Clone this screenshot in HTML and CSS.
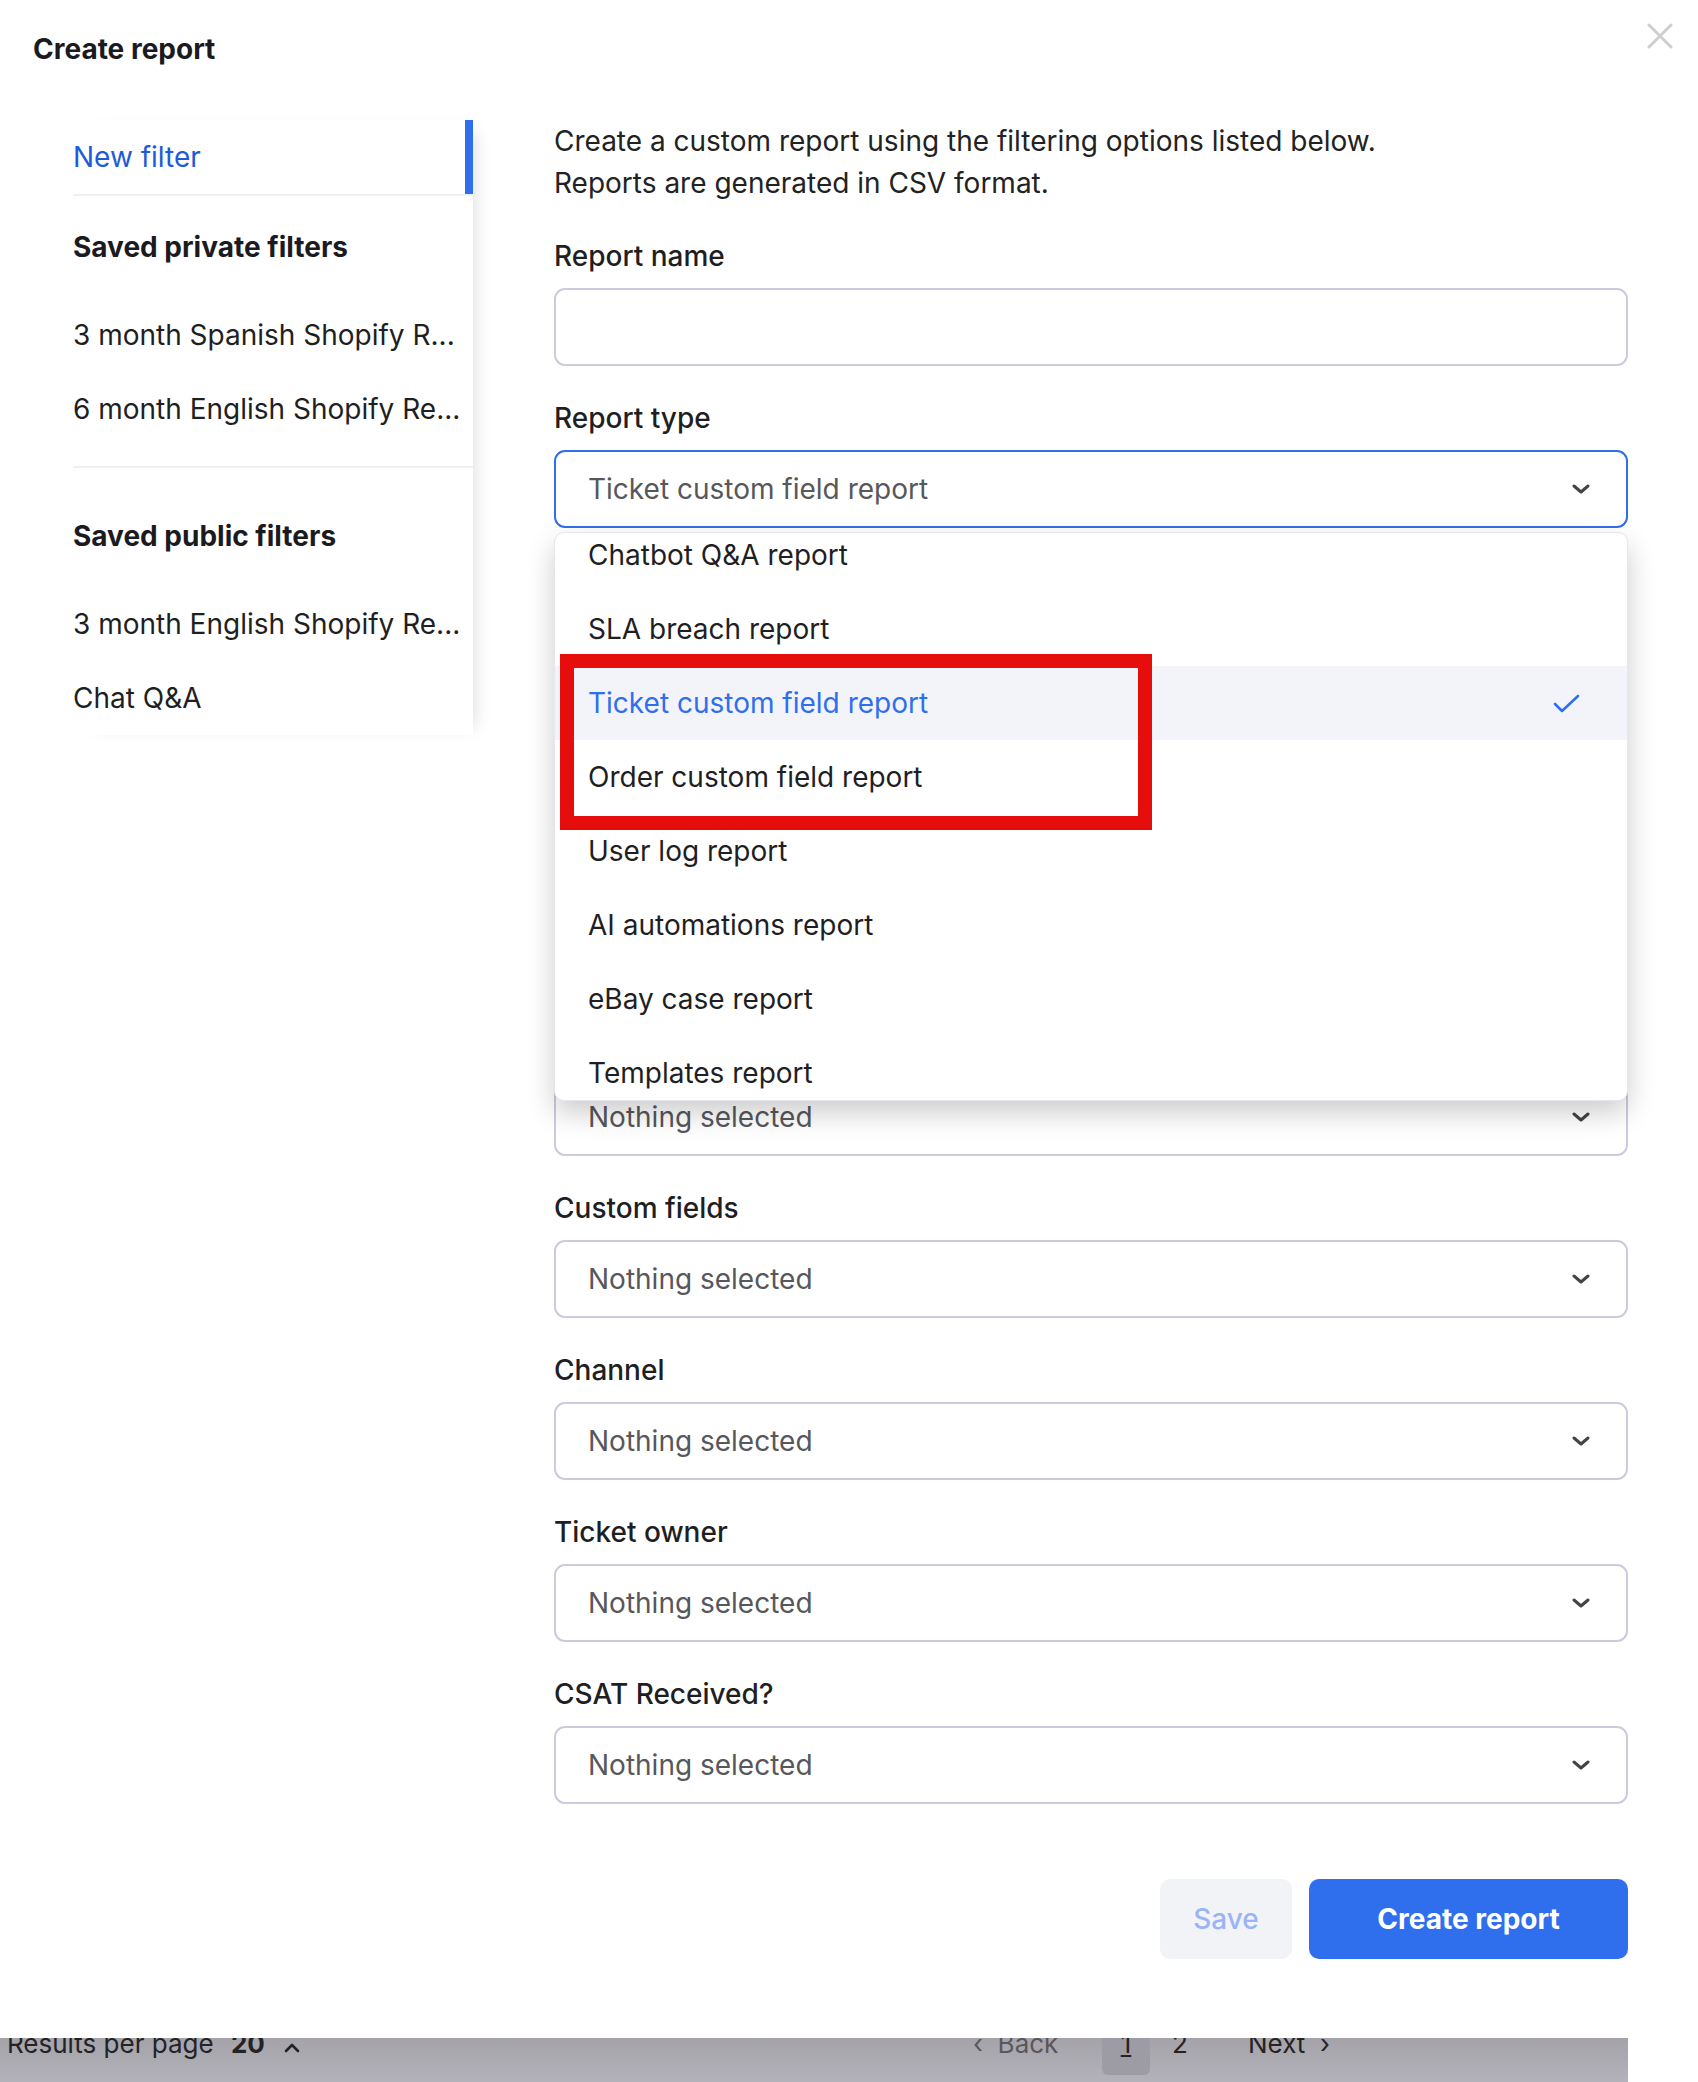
FILE: index.html
```html
<!DOCTYPE html>
<html lang="en">
<head>
    <meta charset="UTF-8">
    <meta name="viewport" content="width=device-width, initial-scale=1.0">
    <title>Create report</title>
    <link rel="stylesheet" href="styles.css">
</head>
<body>
    <div class="modal">
        <div class="modal-header">
            <h1>Create report</h1>
            <button class="close" type="button" aria-label="Close">
                <svg width="26" height="26" viewBox="0 0 26 26"><path d="M2 2 L24 24 M24 2 L2 24" stroke="#cfcfd1" stroke-width="3" stroke-linecap="round"/></svg>
            </button>
        </div>

        <div class="modal-body">
            <aside class="filters">
                <div class="filter-item active">New filter</div>
                <div class="divider"></div>
                <h3>Saved private filters</h3>
                <div class="filter-item">3 month Spanish Shopify R...</div>
                <div class="filter-item">6 month English Shopify Re...</div>
                <div class="divider gap"></div>
                <h3 class="public">Saved public filters</h3>
                <div class="filter-item">3 month English Shopify Re...</div>
                <div class="filter-item">Chat Q&amp;A</div>
            </aside>

            <form class="report-form">
                <p class="intro">Create a custom report using the filtering options listed below.<br>Reports are generated in CSV format.</p>

                <div class="field">
                    <label for="reportname">Report name</label>
                    <input type="text" id="reportname" class="input">
                </div>

                <div class="field">
                    <label>Report type</label>
                    <div class="select-wrap">
                        <div class="select open">
                            <span>Ticket custom field report</span>
                            <svg class="chevron" width="18" height="10" viewBox="0 0 18 10"><path d="M2 2 L9 8 L16 2" fill="none" stroke="#444" stroke-width="3" stroke-linecap="round" stroke-linejoin="round"/></svg>
                        </div>
                        <div class="dropdown">
                            <ul class="options">
                                <li>Chatbot Q&amp;A report</li>
                                <li>SLA breach report</li>
                                <li class="selected">Ticket custom field report
                                    <svg width="27" height="19" viewBox="0 0 27 19"><path d="M2 10 L9 17 L25 2" fill="none" stroke="#2f6fed" stroke-width="2.6" stroke-linecap="round" stroke-linejoin="round"/></svg>
                                </li>
                                <li>Order custom field report</li>
                                <li>User log report</li>
                                <li>AI automations report</li>
                                <li>eBay case report</li>
                                <li>Templates report</li>
                            </ul>
                            <div class="annotation"></div>
                        </div>
                    </div>
                </div>

                <!-- fields hidden behind the open dropdown -->
                <div class="covered">
                    <div class="field hidden">
                        <label>Date range</label>
                        <div class="select"><span>Last 30 days</span></div>
                    </div>
                    <div class="field hidden">
                        <label>Language</label>
                        <div class="select"><span>Nothing selected</span></div>
                    </div>
                    <div class="field hidden">
                        <label>Brand</label>
                        <div class="select"><span>Nothing selected</span></div>
                    </div>
                    <div class="field">
                        <label class="hidden">Tags</label>
                        <div class="select">
                            <span>Nothing selected</span>
                            <svg class="chevron" width="18" height="10" viewBox="0 0 18 10"><path d="M2 2 L9 8 L16 2" fill="none" stroke="#444" stroke-width="3" stroke-linecap="round" stroke-linejoin="round"/></svg>
                        </div>
                    </div>
                </div>

                <div class="field">
                    <label>Custom fields</label>
                    <div class="select">
                        <span>Nothing selected</span>
                        <svg class="chevron" width="18" height="10" viewBox="0 0 18 10"><path d="M2 2 L9 8 L16 2" fill="none" stroke="#444" stroke-width="3" stroke-linecap="round" stroke-linejoin="round"/></svg>
                    </div>
                </div>

                <div class="field">
                    <label>Channel</label>
                    <div class="select">
                        <span>Nothing selected</span>
                        <svg class="chevron" width="18" height="10" viewBox="0 0 18 10"><path d="M2 2 L9 8 L16 2" fill="none" stroke="#444" stroke-width="3" stroke-linecap="round" stroke-linejoin="round"/></svg>
                    </div>
                </div>

                <div class="field">
                    <label>Ticket owner</label>
                    <div class="select">
                        <span>Nothing selected</span>
                        <svg class="chevron" width="18" height="10" viewBox="0 0 18 10"><path d="M2 2 L9 8 L16 2" fill="none" stroke="#444" stroke-width="3" stroke-linecap="round" stroke-linejoin="round"/></svg>
                    </div>
                </div>

                <div class="field">
                    <label>CSAT Received?</label>
                    <div class="select">
                        <span>Nothing selected</span>
                        <svg class="chevron" width="18" height="10" viewBox="0 0 18 10"><path d="M2 2 L9 8 L16 2" fill="none" stroke="#444" stroke-width="3" stroke-linecap="round" stroke-linejoin="round"/></svg>
                    </div>
                </div>

                <div class="actions">
                    <button type="button" class="btn save">Save</button>
                    <button type="button" class="btn primary">Create report</button>
                </div>
            </form>
        </div>
    </div>

    <div class="page-peek">
        <div class="peek-row">
            <div class="per-page">Results per page <b>20</b>
                <svg width="16" height="10" viewBox="0 0 16 10"><path d="M2 8 L8 2 L14 8" fill="none" stroke="#222" stroke-width="2.6" stroke-linecap="round" stroke-linejoin="round"/></svg>
            </div>
            <div class="pager">
                <span class="back">‹ &nbsp;Back</span>
                <span class="page current">1</span>
                <span class="page">2</span>
                <span class="next">Next &nbsp;›</span>
            </div>
        </div>
    </div>
</body>
</html>
```

FILE: styles.css
```css
body{
    margin: 0;
    font-family: Inter, "Noto Sans", sans-serif;
    color: #1f1f23;
    background: white;
}
.modal{
    height: 2038px;
    background: white;
    box-sizing: border-box;
}
.modal-header{
    display: flex;
    justify-content: space-between;
    align-items: flex-start;
    padding: 23px 25px 0 33px;
}
h1{
    margin: 0;
    font-size: 28px;
    line-height: 52px;
    font-weight: 700;
    color: #1b1b1f;
}
.close{
    border: none;
    background: none;
    padding: 0;
    width: 26px;
    height: 26px;
    cursor: pointer;
}
.modal-body{
    display: grid;
    grid-template-columns: 400px 1074px;
    column-gap: 81px;
    padding-left: 73px;
    margin-top: 45px;
}

/* left column */
.filters{
    align-self: start;
    font-size: 28px;
    box-shadow: 12px 2px 16px -10px rgba(0,0,0,0.13);
}
.filter-item{
    line-height: 74px;
    white-space: nowrap;
    color: #1f1f23;
}
.filter-item.active{
    color: #1d5bd8;
    border-right: 8px solid #2f6fed;
}
.divider{
    height: 2px;
    background: #eef0f5;
}
.divider.gap{
    margin-top: 20px;
}
.filters h3{
    margin: 30px 0;
    font-size: 28px;
    line-height: 42px;
    font-weight: 700;
    color: #1b1b1f;
}
.filters h3.public{
    margin-top: 47px;
}

/* right column */
.report-form{
    display: flex;
    flex-direction: column;
    gap: 31px;
    font-size: 28px;
}
.intro{
    margin: 0;
    line-height: 42px;
    color: #222;
}
.field label{
    display: block;
    line-height: 42px;
    margin-bottom: 11px;
    font-weight: 500;
    color: #1f1f23;
}
.hidden{
    visibility: hidden;
}
.input, .select{
    width: 100%;
    height: 78px;
    box-sizing: border-box;
    border: 2px solid #caccdd;
    border-radius: 11px;
    background: white;
    font-family: inherit;
    font-size: 28px;
}
.select{
    display: flex;
    align-items: center;
    justify-content: space-between;
    padding: 0 36px 0 32px;
    color: #57575c;
}
.select.open{
    border-color: #2f6fed;
}
.select-wrap{
    position: relative;
}
.dropdown{
    position: absolute;
    top: calc(100% + 4px);
    left: 0;
    right: 0;
    height: 569px;
    overflow: hidden;
    background: white;
    border: 1px solid #e4e6f0;
    border-radius: 10px;
    box-shadow: 0 12px 28px rgba(0,0,0,0.2);
    z-index: 10;
    box-sizing: border-box;
}
.options{
    list-style: none;
    margin: -15px 0 0;
    padding: 0;
}
.options li{
    height: 74px;
    display: flex;
    align-items: center;
    justify-content: space-between;
    padding: 0 47px 0 33px;
    color: #1f1f23;
}
.options li.selected{
    background: #f3f4f9;
    color: #2f6fed;
}
.annotation{
    position: absolute;
    left: 5px;
    top: 121px;
    width: 592px;
    height: 176px;
    box-sizing: border-box;
    border: 14px solid #e60d0d;
}
.covered{
    display: flex;
    flex-direction: column;
    gap: 24px;
    margin-top: 1px;
}
.actions{
    display: flex;
    justify-content: flex-end;
    gap: 17px;
    margin-top: 44px;
}
.btn{
    height: 80px;
    border: none;
    border-radius: 10px;
    font-family: inherit;
    font-size: 28px;
    cursor: pointer;
}
.btn.save{
    width: 132px;
    background: #f2f3f7;
    color: #9bb5f4;
    font-weight: 500;
}
.btn.primary{
    width: 319px;
    background: #2f6fed;
    color: white;
    font-weight: 700;
}

/* page behind the modal */
.page-peek{
    width: 1628px;
    height: 44px;
    overflow: hidden;
    background: linear-gradient(#a5a3a9, #b3b2ba);
    font-size: 26px;
    color: #232326;
}
.peek-row{
    display: flex;
    margin-top: -15px;
    line-height: 42px;
}
.per-page{
    padding-left: 7px;
    width: 966px;
}
.per-page b{
    margin-left: 10px;
}
.per-page svg{
    margin-left: 12px;
}
.pager{
    display: flex;
    align-items: flex-start;
}
.back{
    color: #58575d;
    width: 129px;
}
.page{
    width: 48px;
    text-align: center;
    margin-right: 6px;
}
.page.current{
    background: #9d9ba4;
    border-radius: 0 0 6px 6px;
    height: 52px;
    text-decoration: underline;
}
.next{
    margin-left: 38px;
}
```
